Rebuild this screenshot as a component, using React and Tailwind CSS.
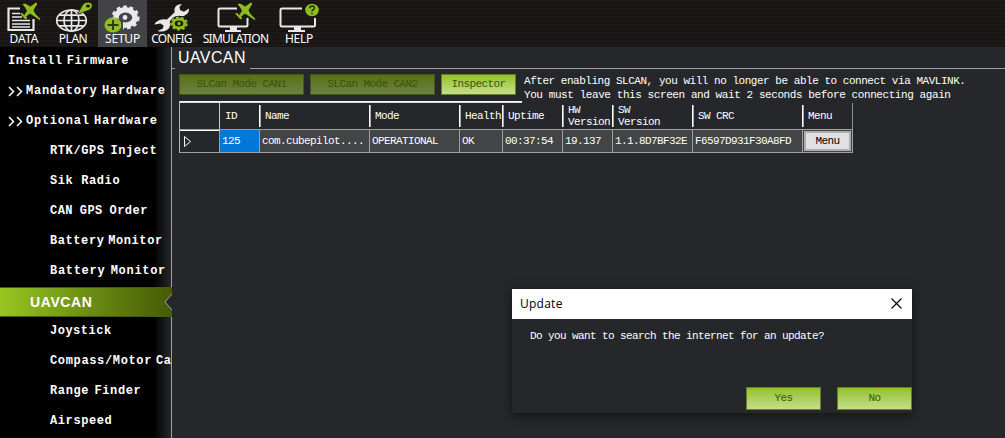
import React from 'react';

const MONO = "font-['Liberation_Mono','Noto_Sans_CJK_SC',monospace]";
const LIGHT = '#e8e8e8';
const LIME = '#8fbc1e';

function Plane({ x, y }) {
  return (
    <g transform={`translate(${x} ${y})`} fill={LIME}>
      <path d="M2.500 1 L5 .5 L12 4.500 L15.500 11 L20.500 16 L19.500 17 L13 12.500 L7.500 9 L5.500 5 Z" />
      <path d="M16 -0.5 Q17.500 -0.5 17 1.200 L13 8 L5 14.500 L3.500 13.500 L9 4.500 Z" />
      <path d="M0 10.500 L2 10 L7 14.500 L6.500 16.500 L5 16 Z" />
    </g>
  );
}

function DataIcon() {
  return (
    <svg viewBox="0 0 48 33" width="48" height="33">
      <path d="M20 8.500 H8.500 V30 H33.500 V19" fill="none" stroke={LIGHT} strokeWidth="2.200" />
      <path d="M12 13.500 H20 M12 17 H22 M12 20.500 H30 M12 24 H30 M12 27 H30" stroke={LIGHT} strokeWidth="1.500" />
      <Plane x={20} y={3} />
    </svg>
  );
}

function PlanIcon() {
  return (
    <svg viewBox="48 0 50 33" width="50" height="33">
      <g fill="none" stroke={LIGHT} strokeWidth="1.700">
        <ellipse cx="71.500" cy="20.500" rx="14.800" ry="10.500" />
        <ellipse cx="71.500" cy="20.500" rx="7.500" ry="10.500" />
        <path d="M71.500 10 V31 M56.500 20.500 H86.500 M59 15.200 H84 M59 25.800 H84" />
      </g>
      <path d="M77.500 14.500 L82 6 Q84 1.800 89 2.200 Q93 3.200 92 7 Q90.500 10.500 86.500 11 Z" fill={LIME} stroke="#1a1817" strokeWidth=".6" />
      <ellipse cx="88" cy="6" rx="2" ry="1.600" fill="#1a1817" />
    </svg>
  );
}

function SetupIcon() {
  return (
    <svg viewBox="98 0 49 33" width="49" height="33">
      <ellipse cx="125.500" cy="17.500" rx="9.500" ry="7.700" fill="none" stroke={LIGHT} strokeWidth="5.500" />
      <ellipse cx="125.500" cy="17.500" rx="12.800" ry="10.700" fill="none" stroke={LIGHT} strokeWidth="2.600" strokeDasharray="3.600 3" />
      <path d="M104 18.500 H118 L123 21.500 V33 H104 Z" fill="#424346" />
      <circle cx="125" cy="17.500" r="2.400" fill={LIGHT} />
      <ellipse cx="113" cy="25" rx="8.500" ry="7.400" fill={LIME} />
      <path d="M113 20 V30 M107.500 25 H118.500" stroke="#2c3811" strokeWidth="1.900" />
    </svg>
  );
}

function ConfigIcon() {
  return (
    <svg viewBox="147 0 49 33" width="49" height="33">
      <path d="M182 4.200 Q175.500 4 174.500 9 V12.500 L167 19.500 Q160.500 18 155.500 22.500 L154.500 24.500 L160.500 23.500 L163.500 25.500 L163 28.500 L157.500 31 Q163 32.500 167 30 Q170.500 27.500 170 23.500 L179 16 Q184 17 187.500 13.500 Q189.500 11 189 8.500 L184 11.800 L180 10 L179.500 6.800 Z" fill={LIGHT} />
      <ellipse cx="179" cy="23.500" rx="9.200" ry="7.800" fill="#1a1817" />
      <ellipse cx="179" cy="23.500" rx="5.700" ry="4.300" fill="none" stroke={LIME} strokeWidth="2.800" />
      <ellipse cx="179" cy="23.500" rx="7.800" ry="6" fill="none" stroke={LIME} strokeWidth="2" strokeDasharray="3 1.850" />
      <circle cx="179" cy="23.500" r="1.700" fill={LIME} />
    </svg>
  );
}

function SimulationIcon() {
  return (
    <svg viewBox="196 0 79 33" width="79" height="33">
      <path d="M237 8.500 H220 Q218.500 8.500 218.500 10 V25 Q218.500 26.500 220 26.500 H246 Q247.500 26.500 247.500 25 V18" fill="none" stroke={LIGHT} strokeWidth="2" />
      <path d="M230 27 H237 V30 H241 V32 H225 V30 H230 Z" fill={LIGHT} />
      <Plane x={235} y={3} />
    </svg>
  );
}

function HelpIcon() {
  return (
    <svg viewBox="275 0 48 33" width="48" height="33">
      <path d="M302 8.500 H282 Q280.500 8.500 280.500 10 V25 Q280.500 26.500 282 26.500 H313.500 Q315 26.500 315 25 V18" fill="none" stroke={LIGHT} strokeWidth="2" />
      <path d="M294 27 H301 V30 H305 V32 H288 V30 H294 Z" fill={LIGHT} />
      <ellipse cx="312" cy="10" rx="6.800" ry="6.200" fill={LIME} />
      <path d="M309.600 8.400 Q309.800 6 312.200 6 Q314.600 6.200 314.400 8.200 Q314.200 9.400 312.800 10 Q312 10.500 312 11.600 M312 12.700 V14.300" fill="none" stroke="#26300f" strokeWidth="1.500" />
    </svg>
  );
}

const tools = [
  { label: 'DATA', Icon: DataIcon, box: 'w-12', text: 'tracking-[0px]' },
  { label: 'PLAN', Icon: PlanIcon, box: 'w-[50px]', text: 'tracking-[-0.5px]' },
  { label: 'SETUP', Icon: SetupIcon, box: 'w-[49px] bg-[#424346]', text: 'tracking-[-0.2px]' },
  { label: 'CONFIG', Icon: ConfigIcon, box: 'w-[49px]', text: 'tracking-[-0.7px]' },
  { label: 'SIMULATION', Icon: SimulationIcon, box: 'w-[79px]', text: 'tracking-[-0.7px]' },
  { label: 'HELP', Icon: HelpIcon, box: 'w-12', text: 'tracking-[-0.3px]' },
];

function Toolbar() {
  return (
    <header className="flex h-[47px] shrink-0 bg-[repeating-linear-gradient(0deg,#161413_0px,#1e1b19_2px,#161413_4px)]">
      {tools.map(({ label, Icon, box, text }) => (
        <div key={label} className={`flex flex-col items-center ${box}`}>
          <Icon />
          <span className={`-mt-0.5 font-['Noto_Sans','Open_Sans',sans-serif] text-[12px] leading-[15px] text-white ${text}`}>
            {label}
          </span>
        </div>
      ))}
    </header>
  );
}

const menu = [
  { label: 'Install Firmware', cls: 'pl-2 tracking-[0.58px] [word-spacing:-3.5px]' },
  { label: 'Mandatory Hardware', cls: 'pl-2 tracking-[0.75px] [word-spacing:-3.5px]', arrows: true },
  { label: 'Optional Hardware', cls: 'pl-2 tracking-[0.75px] [word-spacing:-3.5px]', arrows: true },
  { label: 'RTK/GPS Inject', cls: 'pl-[50px] tracking-[0.6px] [word-spacing:-2px]' },
  { label: 'Sik Radio', cls: 'pl-[50px] tracking-[0.6px]' },
  { label: 'CAN GPS Order', cls: 'pl-[50px] tracking-[0.48px] [word-spacing:-1px]' },
  { label: 'Battery Monitor', cls: 'pl-[50px] tracking-[0.58px] [word-spacing:-4px]' },
  { label: 'Battery Monitor', cls: 'pl-[50px] tracking-[0.7px] [word-spacing:-2.5px]' },
  { label: 'UAVCAN', active: true },
  { label: 'Joystick', cls: 'pl-[50px] tracking-[0.5px]' },
  { label: 'Compass/Motor Ca', cls: 'pl-[50px] tracking-[0.65px] [word-spacing:-4px]' },
  { label: 'Range Finder', cls: 'pl-[50px] tracking-[0.62px] [word-spacing:-2.5px]' },
  { label: 'Airspeed', cls: 'pl-[50px] tracking-[0.6px]' },
];

function Sidebar() {
  return (
    <nav className="flex w-[172px] shrink-0 flex-col border-r border-[#a0a1a3] bg-[linear-gradient(to_right,#000_0px,#000_153px,#26272a_171px)]">
      {menu.map((item, i) =>
        item.active ? (
          <div
            key={i}
            className="-mr-px flex h-[30px] shrink-0 items-center justify-between border-y border-[#465e0c] bg-linear-to-r from-[#97c622] to-[#465b06] pl-[30px] font-['Liberation_Sans',Arial,sans-serif] text-[14px] font-bold text-white"
          >
            <span className="tracking-[0.6px]">{item.label}</span>
            <svg width="8" height="16" viewBox="0 0 8 16">
              <path d="M8 0 L1 8 L8 16 Z" fill="#26272a" />
              <path d="M8 0 L1 8 L8 16" fill="none" stroke="#a0a1a3" />
            </svg>
          </div>
        ) : (
          <div
            key={i}
            className={`flex h-[30px] shrink-0 items-center whitespace-pre pb-0.5 ${MONO} text-[12px] font-bold text-white ${item.cls}`}
          >
            {item.arrows && (
              <svg width="18" height="11" viewBox="0 0 18 11" className="shrink-0">
                <path d="M1 1 L5.500 5.500 L1 10 M9 1 L13.500 5.500 L9 10" fill="none" stroke="#fff" strokeWidth="1.500" />
              </svg>
            )}
            {item.label}
          </div>
        ),
      )}
    </nav>
  );
}

function Button({ children, className = '', disabled }) {
  const look = disabled
    ? 'border-[#465715] from-[#577110] to-[#6c8141] text-[#3d5206]'
    : 'border-[#667f2f] from-[#92c11e] to-[#c6de87] text-[#405404]';
  return (
    <button
      disabled={disabled}
      className={`flex items-center justify-center border bg-linear-to-b ${look} ${MONO} text-[11px] tracking-[-0.6px] leading-none ${className}`}
    >
      {children}
    </button>
  );
}

const columns = [
  { head: '', value: '', w: 'w-10' },
  { head: 'ID', value: '125', w: 'w-10', selected: true },
  { head: 'Name', value: 'com.cubepilot....', w: 'w-[110px]' },
  { head: 'Mode', value: 'OPERATIONAL', w: 'w-[90px]' },
  { head: 'Health', value: 'OK', w: 'w-[43px]' },
  { head: 'Uptime', value: '00:37:54', w: 'w-[60px]' },
  { head: 'HW\nVersion', value: '19.137', w: 'w-[50px]' },
  { head: 'SW\nVersion', value: '1.1.8D7BF32E', w: 'w-20' },
  { head: 'SW CRC', value: 'F6597D931F30A8FD', w: 'w-[110px]' },
  { head: 'Menu', value: 'Menu', w: 'w-[50px]', button: true },
];

function Grid() {
  return (
    <div className={`ml-[7px] w-[674px] border-l border-[#b5b6b8] ${MONO} text-[11px] tracking-[-0.6px] text-white`}>
      <div className="h-0.5 w-[342px] bg-linear-to-b from-white to-[#d0d0d0]" />
      <div className="flex h-[27px] border-b border-[#a0a0a0]">
        {columns.map((c, i) => (
          <div key={i} className={`flex shrink-0 ${c.w} ${i === 9 ? 'border-r border-[#8d8d8f]' : ''}`}>
            <div className="flex flex-1 items-center whitespace-pre pl-[5px] leading-3">{c.head}</div>
            {i < 9 && (
              <div className={i < 1 ? 'w-px bg-[#c8c8c8]' : 'my-0.5 -mr-px w-0.5 border-r border-[#a8a8a8] bg-white'} />
            )}
          </div>
        ))}
      </div>
      <div className="flex h-[23px] border-b border-[#a0a0a0]">
        {columns.map((c, i) => (
          <div
            key={i}
            className={`flex shrink-0 items-center border-r border-[#a0a0a0] ${c.w} ${c.selected ? 'bg-[#0078d7]' : i ? 'bg-[#434446]' : 'border-t border-t-white bg-[#26272a]'}`}
          >
            {i === 0 ? (
              <svg width="39" height="22" viewBox="0 0 39 22">
                <path d="M4.500 5.500 L10.500 10.500 L4.500 15.500 Z" fill="none" stroke="#fff" />
              </svg>
            ) : c.button ? (
              <button className="m-px h-5 flex-1 border-2 border-[#adadad] bg-[#e1e1e1] leading-none text-black">{c.value}</button>
            ) : (
              <span className="whitespace-pre pl-0.5">{c.value}</span>
            )}
          </div>
        ))}
      </div>
    </div>
  );
}

function Dialog() {
  return (
    <section className="absolute left-[512px] top-[289px] flex h-[124px] w-[400px] flex-col bg-[#26272a] shadow-[0_2px_9px_1px_rgba(0,0,0,0.45)]">
      <div className="flex h-[30px] items-center justify-between bg-white pl-2 pr-2.5 text-black">
        <span className="font-['Open_Sans','Noto_Sans',sans-serif] text-[12px] tracking-[0.25px]">Update</span>
        <svg width="11" height="11" viewBox="0 0 11 11" className="-mt-0.5">
          <path d="M.5 .5 L10.500 10.500 M10.500 .5 L.5 10.500" stroke="#000" strokeWidth="1.100" />
        </svg>
      </div>
      <p className={`flex-1 pl-[18px] pt-[11px] ${MONO} text-[11px] leading-3 tracking-[-0.6px] text-white`}>
        Do you want to search the internet for an update?
      </p>
      <div className="flex justify-end gap-4 pb-[3px]">
        <Button className="h-[23px] w-[75px]">Yes</Button>
        <Button className="h-[23px] w-[75px]">No</Button>
      </div>
    </section>
  );
}

export default function App() {
  return (
    <div className="relative flex h-[438px] w-[1005px] flex-col overflow-hidden bg-[#26272a]">
      <Toolbar />
      <div className="flex min-h-0 flex-1">
        <Sidebar />
        <main className="min-w-0 flex-1">
          <div className="flex h-[22px]">
            <div className="w-[3px] border-b border-[#a0a1a3]" />
            <h1 className="w-[75px] pl-[3px] font-['Liberation_Sans',Arial,sans-serif] text-[16px] leading-[21px] tracking-[0.4px] text-white">UAVCAN</h1>
            <div className="flex-1 border-b border-[#a0a1a3]" />
          </div>
          <div className="flex h-8 gap-1.5 pl-[7px] pt-[5px]">
            <Button disabled className="h-[21px] w-[125px]">SLCan Mode CAN1</Button>
            <Button disabled className="h-[21px] w-[125px]">SLCan Mode CAN2</Button>
            <Button className="h-[21px] w-[75px]">Inspector</Button>
            <div className={`whitespace-pre pl-0.5 ${MONO} text-[11px] leading-[14px] text-white`}>
              <p className="tracking-[-0.47px]">After enabling SLCAN, you will no longer be able to connect via MAVLINK.</p>
              <p className="tracking-[-0.42px]">You must leave this screen and wait 2 seconds before connecting again</p>
            </div>
          </div>
          <Grid />
        </main>
      </div>
      <Dialog />
    </div>
  );
}
